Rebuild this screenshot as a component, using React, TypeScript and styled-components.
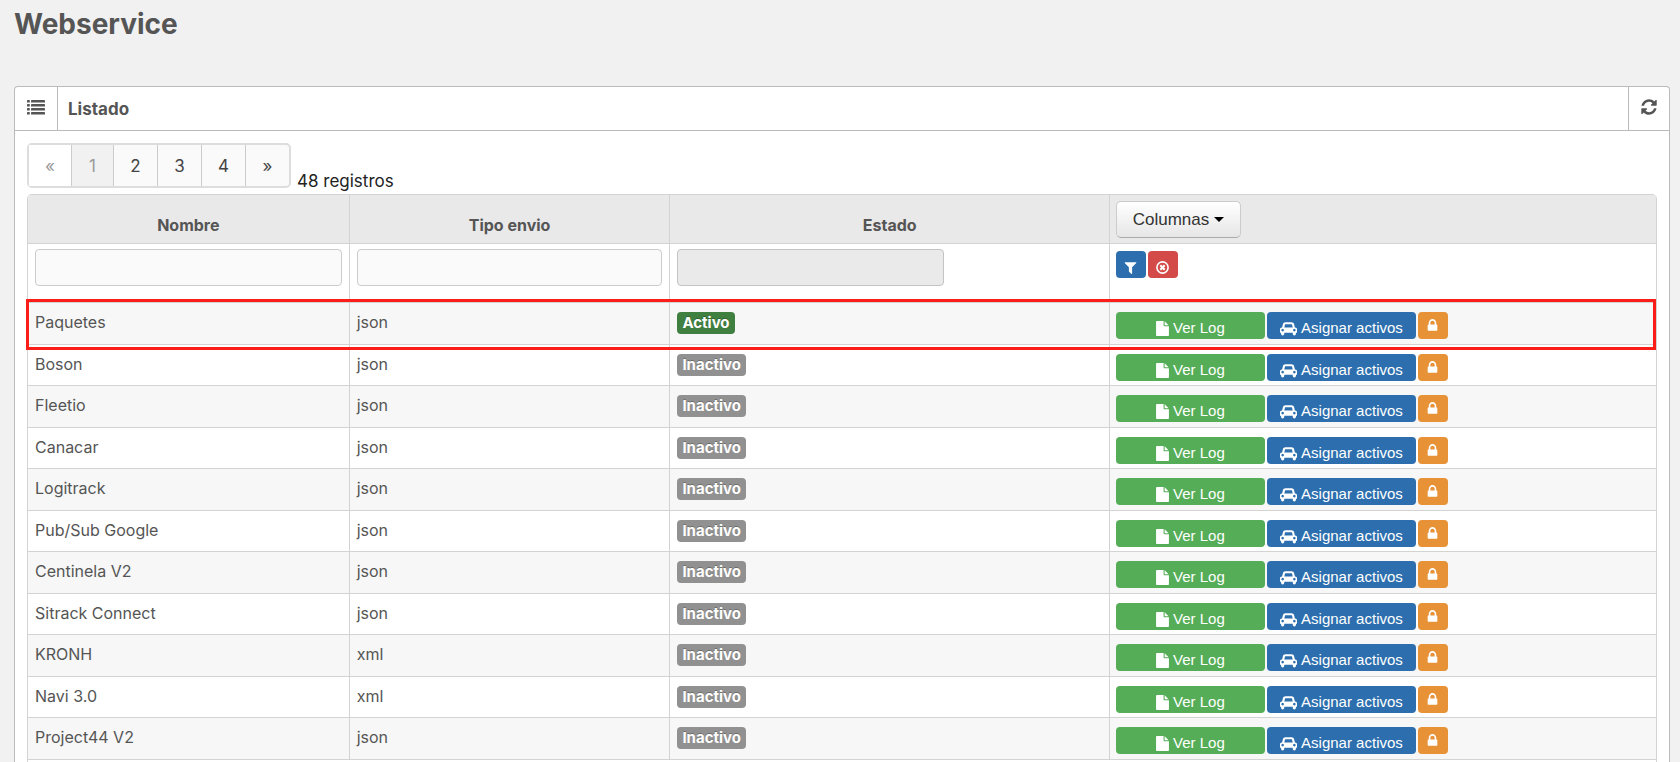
import React from "react";
import styled, { createGlobalStyle, css } from "styled-components";

const GlobalStyle = createGlobalStyle`
  *, *::before, *::after { box-sizing: border-box; }
  html, body { margin: 0; background: #f1f1f1; }
  body, button, input {
    font-family: Inter, "Liberation Sans", sans-serif;
    font-size: 15px;
    line-height: 20px;
    color: #555;
  }
`;

const Page = styled.main`
  display: flex;
  flex-direction: column;
  height: 100vh;
  overflow: hidden;
  padding: 0 10px 0 14px;
`;

const Title = styled.h1`
  flex: none;
  margin: 0 0 40px;
  padding-top: 2px;
  font-size: 28px;
  line-height: 44px;
  font-weight: 700;
`;

const Panel = styled.section`
  display: flex;
  flex-direction: column;
  flex: 1 0 auto;
  background: #fff;
  border: 1px solid #bbb;
  border-bottom: 0;
  border-radius: 4px 4px 0 0;
`;

const PanelHeader = styled.header`
  display: flex;
  align-items: stretch;
  height: 44px;
  border-bottom: 1px solid #bbb;
`;

const PanelIcon = styled.span`
  display: flex;
  align-items: center;
  justify-content: center;
  width: 43px;
  padding-bottom: 3px;
  border-right: 1px solid #bbb;
`;

const PanelTitle = styled.h2`
  flex: 1;
  margin: 0;
  padding-left: 10px;
  font-size: 17px;
  line-height: 44px;
  font-weight: 700;
`;

const RefreshButton = styled.button`
  display: flex;
  align-items: center;
  justify-content: center;
  width: 41px;
  padding: 0 0 3px;
  border: 0;
  border-left: 1px solid #bbb;
  background: none;
`;

const PanelBody = styled.div`
  display: flex;
  flex-direction: column;
  flex: 1;
  padding: 12px 12px 0 12px;
`;

const Toolbar = styled.div`
  display: flex;
  align-items: flex-end;
  gap: 6px;
  margin-bottom: 6px;
`;

const Pagination = styled.nav`
  display: flex;
  height: 45px;
  border: 2px solid #ddd;
  border-radius: 5px;
  background: #fafafa;
`;

const PageLink = styled.a<{ $state?: "disabled" | "current" }>`
  min-width: ${(p) => (p.$state ? "42px" : "44px")};
  font-size: 17px;
  line-height: 42px;
  text-align: center;
  text-decoration: none;
  color: ${(p) => (p.$state ? "#999" : "#444")};
  ${(p) => p.$state === "current" && css`background: #f1f1f1;`}
  ${(p) => p.$state === "disabled" && css`background: #fff;`}
  & + & { border-left: 1px solid #ccc; }
`;

const RecordCount = styled.span`
  font-size: 17px;
  line-height: 14px;
  color: #222;
`;

const Grid = styled.div`
  position: relative;
  flex: 1;
  border: 1px solid #d3d3d3;
  border-bottom: 0;
  border-radius: 5px 5px 0 0;
`;

const Table = styled.table`
  width: 100%;
  table-layout: fixed;
  border-collapse: separate;
  border-spacing: 0;

  th, td { border-bottom: 1px solid #d3d3d3; vertical-align: top; text-align: left; }
  th + th, td + td { border-left: 1px solid #d3d3d3; }
`;

const NarrowCol = styled.col`width: 19.7%;`;
const WideCol = styled.col`width: 27%;`;

const HeadRow = styled.tr`
  height: 49px;
  background: #e9e9e9;
`;

const HeadCell = styled.th`
  padding: 20px 7px 7px;
  font-size: 16px;
  font-weight: 700;
  && { text-align: center; }
`;

const HeadActions = styled.th`
  padding: 6px 6px 0;
`;

const FilterRow = styled.tr`
  height: 59px;
`;

const FilterCell = styled.td`
  padding: 5px 7px 0;
`;

const FilterInput = styled.input<{ $width?: string }>`
  display: block;
  width: ${(p) => p.$width ?? "100%"};
  height: 37px;
  padding: 0 8px;
  border: 1px solid #ccc;
  border-radius: 4px;
  background: #fafafa;
  &:disabled { background: #eaeaea; border-color: #c4c4c4; }
`;

const DataRow = styled.tr`
  height: 41px;
  &:nth-child(even) { height: 42px; background: #f7f7f7; }
`;

const Cell = styled.td`
  padding: 9px 7px 0;
  font-size: 16px;
`;

const ActionCell = styled.td<{ $filter?: boolean }>`
  padding: ${(p) => (p.$filter ? "7px" : "9px")} 6px 0;
`;

const Badge = styled.span<{ $active?: boolean }>`
  display: block;
  width: fit-content;
  padding: 1px 5px;
  border-radius: 4px;
  background: ${(p) => (p.$active ? "#3f7f40" : "#919191")};
  color: #fff;
  font-size: 15px;
  font-weight: 700;
  text-shadow: 0 -1px 0 rgba(0, 0, 0, 0.25);
`;

const Buttons = styled.div`
  display: flex;
  gap: 2px;
`;

const tones = { green: "#56ad57", blue: "#2d6fae", red: "#d34a48", orange: "#e79237" };

const Button = styled.button<{ $tone: keyof typeof tones; $wide?: boolean; $low?: boolean }>`
  display: flex;
  align-items: center;
  justify-content: center;
  gap: 4px;
  width: ${(p) => (p.$wide ? "149px" : "30px")};
  height: 27px;
  padding: ${(p) => (p.$low ? "5px 0 0" : "0")};
  border: 0;
  border-radius: 4px;
  background: ${(p) => tones[p.$tone]};
  color: #fff;
  font-family: "Liberation Sans", Arial, sans-serif;
  white-space: nowrap;
`;

const ColumnsButton = styled.button`
  display: flex;
  align-items: center;
  justify-content: center;
  gap: 5px;
  width: 125px;
  height: 37px;
  padding: 0;
  border: 1px solid #ccc;
  border-bottom-color: #aaa;
  border-radius: 5px;
  background: linear-gradient(#fff, #e6e6e6);
  color: #333;
  font-family: "Liberation Sans", Arial, sans-serif;
  font-size: 17px;
  font-weight: 400;
`;

const Caret = styled.span`
  border: 5px solid transparent;
  border-top-color: #000;
  border-bottom: 0;
`;

const Highlight = styled.div`
  position: absolute;
  top: 104px;
  left: -2px;
  right: 0;
  height: 51px;
  border: 3px solid #fb1d17;
  pointer-events: none;
`;

const ListIcon = () => (
  <svg width="18" height="15" viewBox="0 0 18 15" fill="currentColor" aria-hidden="true">
    {[0, 4, 8, 12].map((y) => (
      <g key={y}>
        <rect x="0" y={y} width="2.8" height="2.6" rx=".6" />
        <rect x="4" y={y} width="14" height="2.6" rx=".4" />
      </g>
    ))}
  </svg>
);

const RefreshIcon = () => (
  <svg width="18" height="18" viewBox="0 0 1792 1792" fill="currentColor" aria-hidden="true">
    <path d="M1639 1056q0 5-1 7-64 268-268 434.5t-478 166.5q-146 0-282.5-55t-243.5-157l-129 129q-19 19-45 19t-45-19-19-45v-448q0-26 19-45t45-19h448q26 0 45 19t19 45-19 45l-137 137q71 66 161 102t187 36q134 0 250-65t186-179q11-17 53-117 8-23 30-23h192q13 0 22.5 9.5t9.5 22.5zm25-800v448q0 26-19 45t-45 19h-448q-26 0-45-19t-19-45 19-45l138-138q-148-137-349-137-134 0-250 65t-186 179q-11 17-53 117-8 23-30 23h-199q-13 0-22.5-9.5t-9.5-22.5v-7q65-268 270-434.5t480-166.5q146 0 284 55.5t245 156.5l130-129q19-19 45-19t45 19 19 45z" />
  </svg>
);

const FilterIcon = () => (
  <svg width="15" height="15" viewBox="0 0 1792 1792" fill="currentColor" aria-hidden="true">
    <path d="M1595 295q17 41-14 70l-493 493v742q0 42-39 59-13 5-25 5-27 0-45-19l-256-256q-19-19-19-45v-486l-493-493q-31-29-14-70 17-39 59-39h1280q42 0 59 39z" />
  </svg>
);

const ClearIcon = () => (
  <svg width="13" height="13" viewBox="0 0 13 13" fill="none" stroke="currentColor" aria-hidden="true">
    <circle cx="6.5" cy="6.5" r="5.6" strokeWidth="1.6" />
    <path d="M4.3 4.3l4.4 4.4M8.7 4.3l-4.4 4.4" strokeWidth="2.2" />
  </svg>
);

const FileIcon = () => (
  <svg width="13" height="15" viewBox="128 0 1536 1792" fill="currentColor" aria-hidden="true">
    <path d="M1152 512v-472q22 14 36 28l408 408q14 14 28 36h-472zm-128 32q0 40 28 68t68 28h544v1056q0 40-28 68t-68 28h-1344q-40 0-68-28t-28-68v-1600q0-40 28-68t68-28h800v544z" />
  </svg>
);

const CarIcon = () => (
  <svg width="17" height="15" viewBox="0 0 2048 1792" fill="currentColor" aria-hidden="true">
    <path d="M480 1088q0-66-47-113t-113-47-113 47-47 113 47 113 113 47 113-47 47-113zm36-320h1016l-89-357q-2-8-14-17.5t-21-9.5h-768q-9 0-21 9.5t-14 17.5zm1372 320q0-66-47-113t-113-47-113 47-47 113 47 113 113 47 113-47 47-113zm160-96v384q0 14-9 23t-23 9h-96v128q0 80-56 136t-136 56-136-56-56-136v-128h-1024v128q0 80-56 136t-136 56-136-56-56-136v-128h-96q-14 0-23-9t-9-23v-384q0-93 65.5-158.5t158.5-65.5h28l105-419q23-94 104-157.5t179-63.5h768q98 0 179 63.5t104 157.5l105 419h28q93 0 158.500 65.5t65.500 158.5z" />
  </svg>
);

const LockIcon = () => (
  <svg width="15" height="15" viewBox="0 0 1792 1792" fill="currentColor" aria-hidden="true">
    <path d="M640 768h512v-192q0-106-75-181t-181-75-181 75-75 181v192zm832 96v576q0 40-28 68t-68 28h-960q-40 0-68-28t-28-68v-576q0-40 28-68t68-28h32v-192q0-184 132-316t316-132 316 132 132 316v192h32q40 0 68 28t28 68z" />
  </svg>
);

interface Service {
  name: string;
  format: "json" | "xml";
  active?: boolean;
}

const services: Service[] = [
  { name: "Paquetes", format: "json", active: true },
  { name: "Boson", format: "json" },
  { name: "Fleetio", format: "json" },
  { name: "Canacar", format: "json" },
  { name: "Logitrack", format: "json" },
  { name: "Pub/Sub Google", format: "json" },
  { name: "Centinela V2", format: "json" },
  { name: "Sitrack Connect", format: "json" },
  { name: "KRONH", format: "xml" },
  { name: "Navi 3.0", format: "xml" },
  { name: "Project44 V2", format: "json" },
];

const ServiceRow = ({ name, format, active }: Service) => (
  <DataRow>
    <Cell>{name}</Cell>
    <Cell>{format}</Cell>
    <Cell>
      <Badge $active={active}>{active ? "Activo" : "Inactivo"}</Badge>
    </Cell>
    <ActionCell>
      <Buttons>
        <Button type="button" $tone="green" $wide $low><FileIcon />Ver Log</Button>
        <Button type="button" $tone="blue" $wide $low><CarIcon />Asignar activos</Button>
        <Button type="button" $tone="orange" aria-label={`Bloquear ${name}`}><LockIcon /></Button>
      </Buttons>
    </ActionCell>
  </DataRow>
);

export default function App() {
  return (
    <>
      <GlobalStyle />
      <Page>
        <Title>Webservice</Title>
        <Panel>
          <PanelHeader>
            <PanelIcon><ListIcon /></PanelIcon>
            <PanelTitle>Listado</PanelTitle>
            <RefreshButton type="button" aria-label="Actualizar"><RefreshIcon /></RefreshButton>
          </PanelHeader>
          <PanelBody>
            <Toolbar>
              <Pagination aria-label="Páginas">
                <PageLink href="#" $state="disabled">«</PageLink>
                <PageLink href="#" $state="current" aria-current="page">1</PageLink>
                <PageLink href="#">2</PageLink>
                <PageLink href="#">3</PageLink>
                <PageLink href="#">4</PageLink>
                <PageLink href="#">»</PageLink>
              </Pagination>
              <RecordCount>48 registros</RecordCount>
            </Toolbar>
            <Grid>
              <Table>
                <colgroup>
                  <NarrowCol />
                  <NarrowCol />
                  <WideCol />
                  <col />
                </colgroup>
                <thead>
                  <HeadRow>
                    <HeadCell scope="col">Nombre</HeadCell>
                    <HeadCell scope="col">Tipo envio</HeadCell>
                    <HeadCell scope="col">Estado</HeadCell>
                    <HeadActions scope="col">
                      <ColumnsButton type="button">Columnas<Caret /></ColumnsButton>
                    </HeadActions>
                  </HeadRow>
                </thead>
                <tbody>
                  <FilterRow>
                    <FilterCell><FilterInput type="text" aria-label="Nombre" /></FilterCell>
                    <FilterCell><FilterInput type="text" aria-label="Tipo envio" /></FilterCell>
                    <FilterCell><FilterInput type="text" aria-label="Estado" $width="267px" disabled /></FilterCell>
                    <ActionCell $filter>
                      <Buttons>
                        <Button type="button" $tone="blue" $low aria-label="Filtrar"><FilterIcon /></Button>
                        <Button type="button" $tone="red" $low aria-label="Limpiar filtro"><ClearIcon /></Button>
                      </Buttons>
                    </ActionCell>
                  </FilterRow>
                  {services.map((service) => (
                    <ServiceRow key={service.name} {...service} />
                  ))}
                </tbody>
              </Table>
              <Highlight />
            </Grid>
          </PanelBody>
        </Panel>
      </Page>
    </>
  );
}
